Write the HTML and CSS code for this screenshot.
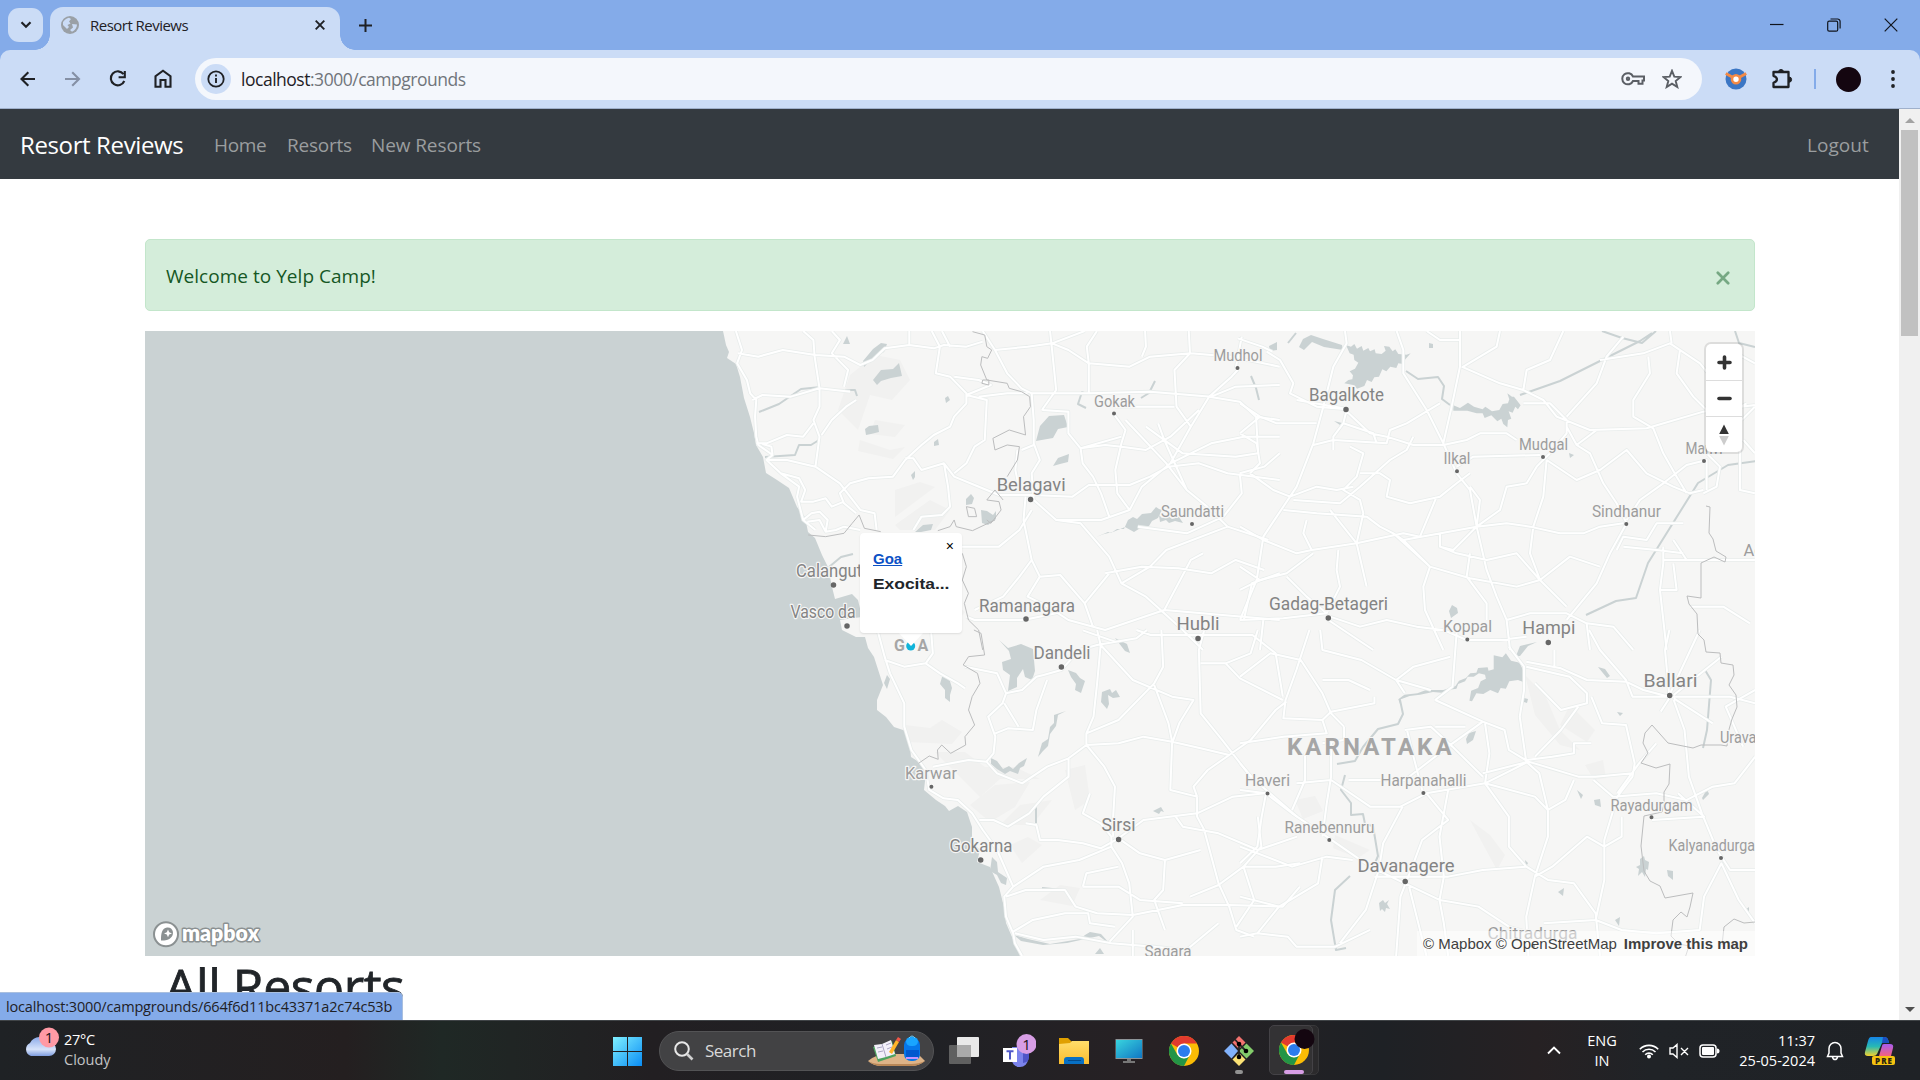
FILE: index.html
```html
<!DOCTYPE html>
<html lang="en">
<head>
<meta charset="utf-8">
<title>Resort Reviews</title>
<link rel="stylesheet" href="styles.css">
</head>
<body>
<header class="tabstrip">
  <div class="tab-search"><svg width="12" height="8" viewBox="0 0 12 8"><path d="M1.5 1.3 6 5.8l4.500-4.500" fill="none" stroke="#1f2125" stroke-width="2.2"/></svg></div>
  <div class="tab">
    <svg class="favicon" width="18" height="18" viewBox="0 0 18 18"><circle cx="9" cy="9" r="9" fill="#9aa0a6"/><path d="M2 6c2-3 4-4 6-4.300L10 3 8 5.500l1.500 2-3 1.500L8 11l-2 2-4-4zM11 8l5 .5c0 3-2 6-5 7.300L9 14l3-2.500z" fill="#cbdcf6"/></svg>
    <span class="tab-title">Resort Reviews</span>
    <svg width="10" height="10" viewBox="0 0 10 10"><path d="m.7.700 8.600 8.600M9.300.700.700 9.300" stroke="#1f2125" stroke-width="1.900"/></svg>
  </div>
  <svg class="new-tab" width="13" height="13" viewBox="0 0 13 13"><path d="M6.500 0v13M0 6.500h13" stroke="#1f2125" stroke-width="2"/></svg>
  <div class="win-buttons">
    <svg width="14" height="14" viewBox="0 0 14 14"><path d="M0 6.500h13.500" stroke="#10141c" stroke-width="1.200"/></svg>
    <svg width="14" height="14" viewBox="0 0 14 14" fill="none" stroke="#10141c" stroke-width="1.200"><rect x=".7" y="3.200" width="10" height="10" rx="1.500"/><path d="M3.500 1h7a2.500 2.500 0 0 1 2.600 2.500v7"/></svg>
    <svg width="14" height="14" viewBox="0 0 14 14"><path d="m.7.700 12.600 12.600M13.300.700.700 13.300" stroke="#10141c" stroke-width="1.200"/></svg>
  </div>
</header>
<div class="toolbar">
  <div class="nav-icons">
    <svg viewBox="0 0 24 24"><path d="M19 12H6M12.300 5.200 5.500 12l6.800 6.800" class="ico"/></svg>
    <svg viewBox="0 0 24 24"><path d="M4 12h13.500M11.200 5.200 18 12l-6.800 6.800" class="ico dim"/></svg>
    <svg viewBox="0 0 24 24"><path d="M17.500 7.200A7 7 0 1 0 18.300 14M18.800 4v6.200h-6.200" class="ico"/></svg>
    <svg viewBox="0 0 24 24"><path d="M4.500 19.800V9.200L12 3.700l7.500 5.500v10.600h-5V13h-5v6.800z" class="ico"/></svg>
  </div>
  <div class="omnibox">
    <div class="site-info"><svg width="18" height="18" viewBox="0 0 18 18"><circle cx="9" cy="9" r="7.700" fill="none" stroke="#1f2125" stroke-width="1.800"/><path d="M9 8v5M9 4.500v2" stroke="#1f2125" stroke-width="1.900"/></svg></div>
    <span class="url">localhost<span class="path">:3000/campgrounds</span></span>
    <svg class="key" width="24" height="14" viewBox="0 0 24 14" fill="none" stroke="#5b5f65" stroke-width="2"><path d="M12 4.500h11v4h-1.500v3.200h-4V9H12A5.600 5.600 0 1 1 12 4.500z"/><circle cx="7" cy="6.800" r="1.200"/></svg>
    <svg class="star" width="20" height="20" viewBox="0 0 20 20"><path d="m10 1.800 2.300 5.800 6.200.4-4.800 4 1.600 6-5.300-3.400L4.700 18l1.600-6-4.800-4 6.200-.4z" fill="none" stroke="#5b5f65" stroke-width="1.900"/></svg>
  </div>
  <svg class="ext" width="22" height="22" viewBox="0 0 22 22"><circle cx="11" cy="11" r="10.500" fill="#3b76c4"/><path d="M.8 5.500 9 10M21.200 5.500 13 10" stroke="#f48a45" stroke-width="3"/><circle cx="11" cy="11.300" r="4" fill="#fff" stroke="#f48a45" stroke-width="2.600"/></svg>
  <svg class="puzzle" width="22" height="22" viewBox="0 0 22 22"><path d="M2.500 4h15v15h-15v-4.200c4.600-1.600 4.600-5.400 0-7z" fill="none" stroke="#1f2125" stroke-width="2.300" stroke-linejoin="round"/><path d="M7.500 4a2.500 2.500 0 0 1 5 0zM18 9a2.600 2.600 0 0 1 0 5.200z" fill="#1f2125" stroke="#1f2125"/></svg>
  <div class="sep"></div>
  <div class="avatar"></div>
  <svg class="dots" width="4" height="20" viewBox="0 0 4 20" fill="#1f2125"><circle cx="2" cy="3" r="1.900"/><circle cx="2" cy="10" r="1.900"/><circle cx="2" cy="17" r="1.900"/></svg>
</div>
<div class="viewport">
  <main class="page">
    <nav class="navbar">
      <span class="brand">Resort Reviews</span>
      <span class="link home">Home</span><span class="link resorts">Resorts</span><span class="link new">New Resorts</span>
      <span class="link logout">Logout</span>
    </nav>
    <div class="container">
      <div class="alert"><span>Welcome to Yelp Camp!</span>
        <svg width="14" height="14" viewBox="0 0 14 14"><path d="m1.800 1.800 10.400 10.400M12.200 1.800 1.800 12.200" stroke="#76a883" stroke-width="2.700" stroke-linecap="round"/></svg></div>
      <div class="map">
        <svg class="canvas" width="1610" height="625" viewBox="145 331 1610 625">
          <defs>
            <g id="roads">
              <g transform="translate(640 320) scale(.408 .3333)">
                <path d="M235 33 250 90 238 130 262 180 270 220 285 240 282 290 285 350 290 375 325 405 310 420 345 460 390 500 385 530 400 600 430 630M325 405 322 380 300 372M315 420 360 420 430 440M345 460 390 475 405 510 395 545 425 545 455 535 470 560 500 545M410 605 440 600 455 635M400 600 420 580 440 575 460 600 455 635 480 630 500 620 540 630M400 33 425 60 428 110 440 205 440 260 425 300 440 350 430 440 490 490 540 570 575 580 580 630M470 33 490 60 470 100 490 125 510 150 500 200M240 100 290 110 350 90 430 105 500 110 540 135 570 120 600 85 660 75 720 85 745 75 800 80 840 65M660 75 660 33M275 240 300 225 370 230 440 205 515 215M285 370 310 370 360 345 400 350 425 310M445 345 470 300 505 260 530 240M715 33 735 80 725 160 760 170 800 220 800 250 770 290 760 320 720 345 690 375 650 420 620 470 560 475 515 490 490 520 500 550 530 580M740 33 760 80M650 415 670 415 690 450 745 430 770 470 820 495 880 525 960 525 1060 530 1100 495 1200 495 1250 470 1295 440 1370 430 1440 460 1568 480M770 460 800 430 820 380 845 360 850 240 800 225M800 225 860 195 830 180 770 170M830 230 900 220 950 220M745 430 755 500 760 560 740 585 690 590 670 630M840 33 870 90 900 160 935 205 960 220 965 300 965 370 980 420 960 460 965 540 1020 600 1080 610 1150 710 1180 790 1240 830 1285 880 1330 930 1380 990M935 390 965 375M925 390 920 450 930 510M870 90 950 80 1010 70 1050 90 1100 130 1200 140 1250 110 1350 100 1450 110 1568 140M1005 33 1010 90 1020 210 985 270M960 220 1100 220 1250 215 1400 230 1460 200 1568 195M1010 70 1090 33M1100 220 1100 130 1095 80 1120 33M1238 33 1240 80 1230 110M1345 33 1348 100 1310 150 1315 260 1350 320M1395 230 1350 320 1300 430 1230 500 1200 570 1130 600 1020 600M1160 280 1190 330 1180 370 1165 450 1170 520 1200 570M1180 350 1080 385 1050 340 1050 275 985 270M1080 385 1085 430 1110 470 1130 520 1150 590M1165 260 1310 260M1080 385 1140 375 1180 380 1240 390 1300 350 1370 270M1190 300 1290 430 1340 510 1390 560 1440 620 1540 660M960 720 980 770 1030 765 1090 850 1110 920M945 530 940 600 960 720 930 770 890 830 820 870M780 680 880 680 930 630 960 570M980 770 950 830 1000 860 1050 900 1140 930 1285 870M1180 790 1250 740 1290 690 1440 620M1285 870 1350 720 1380 700M1285 870 1568 900M1470 460 1475 520 1430 590 1340 640 1220 620M1395 230 1470 245 1510 290 1568 300M1510 290 1515 400 1460 410 1330 400 1240 320M1568 350 1480 350 1400 370 1300 430M1465 150 1450 170 1395 230M1460 145 1475 50M1465 55 1525 80 1550 95M1470 460 1530 440 1568 400M1270 310 1285 360 1340 510M800 890 820 900 940 900 1020 880M1480 900 1500 790 1568 760M1090 850 1150 760M1140 760 1230 740 1320 745 1400 760 1460 720 1530 750"/>
              </g>
              <g transform="translate(740 630) scale(.3571 .3333)">
                <path d="M385 0 405 80 420 130 460 220 460 290 480 360 520 420 530 480 570 505 610 510 650 550 680 600 720 660 765 770 740 800 745 860 765 910 770 940 790 978M405 90 460 110 520 100 560 130 610 160 630 175M535 0 540 70 520 100M630 110 720 130 745 190 790 180 830 140 850 135 900 120 950 60 1000 45 1110 25 1140 0M745 190 735 220 695 260 715 320 710 370 690 395 640 390 540 410M740 220 780 290M715 310 750 295 820 300 830 240 860 150M690 395 720 430 790 460 860 410 920 385 970 345 1060 340 1130 320 1210 335 1290 355 1370 375 1430 330 1500 240 1530 215M670 570 710 570 750 590 810 550 850 500 920 440 920 385M800 580 830 585 840 630 890 630 960 640 1010 655 1060 625M970 345 970 310 1060 270 1160 160 1185 110 1180 0M970 310 990 260 1000 160 1010 45 1000 0M1010 45 1100 150 1210 200 1270 210 1230 280 1210 340 1205 480 1280 500M970 345 1020 410 1050 470 1045 560 1045 620M1160 165 1200 280 1210 335M980 490 960 550 1010 580 1040 620 1040 650 1070 700 1090 760 1100 860 1035 935M1060 625 1130 570 1280 550 1380 500 1470 490M1300 0 1285 60 1290 250 1350 330 1430 440 1560 560M1290 100 1360 100 1430 70 1450 0M1360 100 1400 145 1520 210M1280 500 1280 560 1300 600 1340 760 1370 830 1390 900 1440 920M1280 500 1270 470 1310 420 1370 375M1220 560 1240 590 1340 610 1450 660 1560 620M765 770 850 710 950 690 1040 650M745 800 800 780 910 780 940 830 1000 850 1100 855 1240 825 1370 825 1520 830 1568 770M765 905 820 870 910 850 975 850 980 880 1050 890M1060 625 1120 670 1190 690 1290 660M960 770 1060 770 1120 810 1240 820M1110 0 1150 15 1285 15 1435 15 1500 70 1520 200M1450 560 1460 650 1410 710 1340 765 1260 800M1410 710 1500 710 1568 700M1410 710 1440 810 1390 890M770 910 850 930 940 920 1040 940 1160 950 1250 960 1340 880M1100 900 1100 978M1190 690 1185 780 1160 810 1190 900M960 770 970 730 1060 710M960 1 1050 35"/>
              </g>
              <g transform="translate(1240 320) scale(.3333)">
                <path d="M315 33 320 70 280 140 250 260 220 370 170 500 70 650 50 780 0 900M0 250 60 290 110 310 230 310M60 290 0 340M80 95 120 120 160 190 150 220 230 260 320 268M170 240 310 265 390 340 440 350 520 375 610 375 680 360 720 340 800 340 830 360M470 33 490 90 490 160 560 270 610 370 650 460 690 510 710 620 740 750 770 830 800 900 810 990M660 33 660 140 635 260 610 370M665 140 780 190 850 210 910 240 950 290 1050 330 1220 325 1390 275 1545 255M780 33 770 80 670 140M660 60 600 60 560 33M850 210 860 150 930 120 970 33M850 250 930 250 980 300 980 340 930 400 890 440 860 490 800 500 780 570 710 620M1150 50 1100 110 1070 190 980 290M1080 120 1210 100 1290 70 1380 130 1420 180M1320 90 1310 160 1360 230 1400 270M1225 110 1230 160 1180 240 1180 290 1240 325 1270 400 1310 470 1340 520M980 320 1010 375 1050 400 1090 490 1130 550 1160 610 1110 700 1070 790 980 900M1010 375 1070 330M920 420 1010 480 1080 450 1160 390 1220 460 1300 500 1350 520 1390 510M900 405 700 410 650 440M920 420 910 530 880 620 870 700 900 780M710 620 800 610 870 620 960 640 1030 640 1080 620 1150 610M1160 600 1200 540 1270 490 1340 435 1400 420 1400 510M0 340 50 370 60 430 30 460M220 375 280 360 440 370 450 330 500 310 600 250M320 270 310 310 280 350 280 390M310 310 400 340 410 370M330 380 370 400 350 470 310 510 360 540 370 580 350 670 380 800M360 460 420 460 450 480 440 530 510 550 600 530 650 490 690 460M30 460 100 510 150 530 230 500 290 510 340 500M160 540 300 550 360 500 450 420 500 390 520 350M130 570 230 580 380 590 420 620 460 640 490 660 710 620M200 600 190 640 215 690 350 670 490 640 540 650 590 530M0 620 70 660 170 700 215 690M0 740 60 780 140 760 220 700M0 810 60 780M140 770 200 830 260 880M295 690 290 750 300 800 260 880 130 895 0 900M270 890 360 920 440 900 530 920 610 930 680 960 780 960 860 950M265 900 400 990M70 900 60 990M490 660 570 740 690 775 830 800 900 780 990 710 1080 740M460 640 570 740 550 800 555 870 610 990M600 680 650 700 740 720 830 700 900 780 980 860M690 700 680 770 740 850 740 900M710 620 640 690 600 680 600 640M690 500 720 540 710 620M1150 680 1250 690 1330 700M1130 690 1150 650 1220 660 1250 610 1330 610M1270 680 1270 730 1260 810 1280 990M1300 660 1340 720M1270 720 1545 720M1300 730 1310 810 1260 810M1040 910 1120 920 1180 990M800 900 870 880 980 880 1040 910 1050 990M1350 860 1450 860 1530 910M1500 390 1500 510 1545 520M1490 100 1545 130M1520 250 1450 290M1400 400 1440 440 1430 500 1390 520M1290 33 1295 70M1505 300 1545 260M1510 360 1545 400M270 570 350 670"/>
              </g>
              <g transform="translate(1240 630) scale(.4337 .3333)">
                <path d="M0 140 70 70 140 90 190 190 210 250 240 290M160 0 130 120 105 210 100 265 190 270 210 245 310 220 310 200M190 150 250 150 300 180M185 0 190 60 280 90 360 150 440 180M485 80 400 110 360 150 380 190M500 0 490 170 450 210M620 50 655 110 655 180 645 260 660 395 690 430 710 540 710 620 680 740 660 860 665 978M660 110 760 140 800 190 800 220 740 240 680 160M660 95 740 115 800 150 890 155 930 180 990 200 1130 200 1188 220M725 60 725 115M805 0 830 60 890 150 905 200 990 200M990 200 980 60 990 0M990 195 1060 0M1000 195 1110 80M1000 205 1090 280M1000 210 1025 300 1035 440 1065 550 1100 660 1130 720 1188 720M970 245 990 205M450 210 560 275 610 300 620 360 665 395 780 440 820 440 905 430M560 275 490 340 380 450 250 450M565 280 575 370 565 460 620 560 620 650 660 710 710 750 770 760 820 850 830 978M665 395 565 460 430 490 370 530 300 530 210 450 130 460M665 395 560 430M770 450 750 510 710 540M660 390 720 380 770 370 770 340 810 340M780 230 740 300 680 380M810 200 835 280 890 285 910 400 905 440 870 500 840 630 840 750 820 870 700 880M680 740 720 710 800 620 840 650 880 620 880 560M815 450 860 500 960 490 1030 510 1090 470 1140 460 1188 380M950 570 1070 560 1010 490M565 460 680 500 710 540M430 490 480 570 420 630 400 700 370 800 360 978M375 530 330 640 320 720 290 840 230 940M380 300 440 290 490 350 560 440M385 300 400 380 420 480M450 290 520 290M480 480 460 620 470 740 460 810 470 880 480 978M0 480 60 490 120 550 200 620 300 710 380 760 460 810 550 830 620 890 700 920M60 490 50 560 40 650 0 700M0 650 120 710 200 680 260 690M190 680 180 760 90 830 40 910 0 920M40 910 110 920 130 950 220 950 300 900M310 740 400 740 480 740 560 720 660 710M390 770 430 978M820 870 880 900 960 910 1060 900 1070 800 1110 700 1150 810 1188 880M960 340 920 400 870 490M1160 350 1120 230 1188 180M190 270 200 310 100 320 0 340M240 290 240 330 190 340M210 330 210 440 200 520 190 620M150 370 150 450 120 540M0 800 90 830M0 400 40 460"/>
              </g>
            </g>
          </defs>
          <rect x="145" y="331" width="1610" height="625" fill="#f6f6f5"/>
          <g class="hills">
            <path d="m850 375 25-20 25 5 10 20-18 20-22-5-12 35-20-20zM875 420l30 5-10 12-25-3zM860 440l30 10 15-3-12 12-35-8zM895 490l25-8 15 5-20 15-20 15zM895 525l35-25 20 10-15 20-35 0zM925 610l25-10 15 12-12 15-25-5zM905 725l25 3 12-8 20 12-10 12-45-2zM935 752l30 0 20 15 30 0 25 12-40 0-20 18-25-25zM970 805l25-20 35-3-15 25-25 15zM1000 825l20-20 32-5-20 25zM1010 845l18-8 14 8-20 18zM1040 900l20-15 20 3-8 18zM1065 770l20-5 5 35-15 10zM1525 675l20 20 15 35 20 20-20-5-25-30zM1560 725l10-20 25 25-8 12zM1295 800l20-4 8 15-20 8zM1335 835l35 15-12 8-25-10zM1470 820l20 15 15 20-8 15-12-22zM1585 765l18-5 3 18-12 2z"/>
          </g>
          <path class="water" d="M145 331H723L726 345 729 352 727 358 736 364 740 377 744 398 750 417 754 433 756 445 763 457 766 473 777 480 789 488 797 507 805 517 808 532 815 538 822 555 828 567 832 587 835 599 852 594 858 600 862 617 840 620 842 630 856 637 865 637 868 648 874 657 883 685 877 700 877 710 886 717 894 727 906 731 910 747 911 757 919 762 926 772 924 790 936 800 945 806 949 811 958 806 967 812 972 827 972 842 980 850 977 862 990 867 999 887 1004 907 1006 923 1012 937 1020 956H145z"/>
          <g class="water">
            <path d="m863 361 10-12 8-6 6 1-3 8-10 5-7 7-3 3zM873 380l8-10 12-1 6-6 3 13-11 2-10 3-4 4zM865 429l4-3 9-1 1 7-8 2-5 1zM843 344l4-8 3 8zM945 398l3-2 2 4-4 3zM934 442l4-3 1 6-5 1zM911 475l4-4 0 6-2 3zM966 499l5-5 3 4-2 6-6 1zM915 532l8-7 10-1-2 6-10 2zM981 510l6 1 6 4 3-4 0 8-8 6-6-2zM1036 441l4-15 9-10 15-1 4 12-10 2-5 9zM1053 466l5-8 11-4-1 8-8 2z"/>
            <path d="m1096 537 12-5 3 1 6-4 7 0 4-9 5-3 4 2 5-5 9-1 5-6 3 2 3 1-4 8-6 3-3 5-7 1-8 5-9-5-12 5-9 2zM1159 515l3 3 6-2 4 3 7-2 4 6-8-2-6 2-3-3-6 2zM999 640l9 8 13-4 12 5 2 22-3 9-7-3-2-8-6 9 0 9-9 4 2-16-7-5-1-8 9-3-2-8zM1068 670l8 3 4 5 5 3-2 6-2 6-6-3 1-6-5-7zM1102 692l8-3 2 4 4-3 4 7-7 1-5-3 1 9-2 5-6-7zM944 677l5 1 3 10-2 7 0 7-5-4 0-8-5-6 2-7zM1066 711l-8 4-2 11-6 8-2 12-5 5-5 6 4-14 6-4 2-12 4-4 0-8zM991 758l6 3 6 8 6-3 4 3 6-6 8-5-3 8-4 2-2 6-8-3-5 3-8-5-6-5zM1153 811l8-4 3 5-3-1-2 3zM1115 638l12 6 3 9-5-2zM992 857l5 5 1 10 9 6-1 7-5-2-4-8-7-4zM1014 935l14 4 22 5 30-5 5-4 5-3 11 2 10 11-12-9-14 3-18 4-24 2-22-4zM1095 954l5-6 4 6zM884 683l3-8 3 4-3 10z"/>
            <path transform="translate(1240 320) scale(.3333)" d="m318 75 15 5 10-8 8 14 14-8 5 14 15-8 5 10 14-6 3 12 18 2 12-10-5-14 16 2 10 14 8-6 9 14 25 2 12-4-16 18-6 14-15-2-6 14-18-4-12 14-12-6-10 22-14 2-8 14-14-6-8 18-22 8-8-10-30-6 12-10 12-2 2-12-10-12 16-8 10-18-12-8-2-16-12-4z"/>
            <path transform="translate(1240 320) scale(.3333)" d="m640 256 20 8 24-16 18 12 26 8 8-8 20 14 22-4 10-18 16-2 4-12-6-18 14 10 6 0 20 26-8 12-8-8-8 18-12-4 8 22-10 4-2 22-12-10-6-16-12 8-18-18-20 8-6-14-18 0-28-8-42 0z"/>
            <path d="M1311 335l12 4 19 6 1 5-19-3-12-5-8 8-5-3 4-8zM1269 346l8-4 0 8-7 1zM1429 343l4 1 0 4-4 0zM1334 421l8 2-2 2zM1569 453l5 2-4 3zM1449 611l3-6 5 3 1 5-7 5zM1516 656l4-10 17-4-9 4-8 10z"/>
            <path transform="translate(1240 630) scale(.4337 .3333)" d="m585 76 20 6 8-12 12 22 20 6 10 30-2 28-12-6-20 4-8 22-12-2-6 16-18-10-16 12-16-2-10 24-6-2 4-30 16-8 6-20 12-8-2-12-14-4-12 10-14 0-6 14-16 8-4 14-20 4-14 8-20-2-30 8-24 4-20 10-2 14-4-14 14-14 30-4 20-10 40 0 28-12 8-16 16-8 10-14 14-2 4-14 22-2 2 10 12-4z"/>
            <path d="M1598 667l7 2 5 7-3 2zM1617 712l6 1-3 3zM1524 698l4 1-1 4-3-1zM1466 739l3-6 7-2-3 9-6 4zM1577 790l6 5-2 4zM1594 800l6-1 1 8-6-2zM1640 859l4-3 1 4 4 2-1 8-2-1-1 8-3-5-4 4 1-7-3-2 4-2zM1667 870l6 1 0 9-5-4zM1525 860l3 3-2 4zM1558 892l6-4-1 8zM1379 903l4-3 2 3 4-3-2 4 3 5-4-1-1 4-3-3-2 2zM1615 920l5-3-1 9zM1702 798l5-9 2 5-6 6zM1745 910l4-3 0 9z"/>
          </g>
          <g class="rivers">
            <path d="m759 412 20-8 22-15 20-2M845 390h10l2 6M765 457l30-2 4-10 12 0 8-5M1141 398l8-5 6-12M1251 376l5 12 3 12M1086 408l-8-4 4-12 4 2M829 567l12-10 12-3M1406 371l12 8 20-2 6 9-2 13 8 6M1520 395l40-14 40-20 40-20 12-8M1602 331l20 7 20 5 14-12M1735 331l4 12 16 4M1586 615l30-14 20-3 12-35 25-40 25-40 30-18 28-4M1400 700l3 14-5 10-20 5-15 18-8 14-18 3M1345 775l-4 15 10 13 0 12 12-1 2 10 8 2 5 30-6 14M1350 876l-15 14-4 30 5 30 10-2M1705 670l6 10-4 50-4 18M1288 343l8-10M1036 805l0 18M1042 888l20 2"/>
          </g>
          <use href="#roads" class="casing"/>
          <use href="#roads" class="road"/>
          <g class="borders">
            <path transform="translate(640 320) scale(.408 .3333)" d="M815 35 845 45 850 80 862 90 852 115 838 110 835 135 850 180 900 190 905 205 935 215 955 230 957 260 940 290 945 345 905 330 865 355 870 390 900 375 930 380 925 420 900 470M890 540 870 510 850 540 880 545 885 570 860 610 850 600M800 560 820 565 825 590 805 590zM840 180 855 180 855 195 838 190zM870 600 815 632 775 620 770 600 760 620 730 632M412 645 455 650 500 640 520 610 537 585 550 625 590 635M790 700 800 740 790 780 805 820 795 850 805 900 830 930 840 990"/>
            <path transform="translate(740 630) scale(.3571 .3333)" d="M655 0 675 10 685 75 640 80 625 105 665 130 672 160 650 200 640 240 657 285 630 320 632 345 590 370 565 345 553 360 555 388 530 378 500 400"/>
            <path d="m1706 506 4 1-1 26 4 6 3 12 10 6-1 5-11-5-13 6v35l-14-2 2 8 8 10 1 20 6 6 2 12 14 1 1 10 12 2 1 10-5 10 7 10 1 12-5 12-4 14-1 13-6-1-20 0-8 3-25-5-16-18-7 8-2 10 5 10-7 10 15 5 14-4-1 20-5 8 0 12-2 8-18 4-3 30 3 25 6 10 10 5 5 12 28-5-3 14-3 10-6-5-8 8-2 16 8 8 10 2-4 12 12 10"/>
            <path d="m1722 945 2-18 10-8 10 4 11-1"/>
          </g>
          <g class="towns small">
            <text x="1213.500" y="361" textLength="49" lengthAdjust="spacingAndGlyphs">Mudhol</text><text x="1094" y="406.500" textLength="41" lengthAdjust="spacingAndGlyphs">Gokak</text><text x="1161" y="517" textLength="63" lengthAdjust="spacingAndGlyphs">Saundatti</text><text x="905" y="779" textLength="52" lengthAdjust="spacingAndGlyphs">Karwar</text><text x="1144.500" y="956.500" textLength="47" lengthAdjust="spacingAndGlyphs">Sagara</text><text x="1245" y="785.500" textLength="45" lengthAdjust="spacingAndGlyphs">Haveri</text><text x="1443.500" y="464.300" textLength="27" lengthAdjust="spacingAndGlyphs">Ilkal</text><text x="1519" y="450" textLength="49" lengthAdjust="spacingAndGlyphs">Mudgal</text><text x="1685.500" y="454" textLength="37" lengthAdjust="spacingAndGlyphs">Manvi</text><text x="1592" y="517" textLength="69" lengthAdjust="spacingAndGlyphs">Sindhanur</text><text x="1743.500" y="555.700">Adoni</text><text x="1443" y="631.500" textLength="49" lengthAdjust="spacingAndGlyphs">Koppal</text><text x="1720" y="743" textLength="76" lengthAdjust="spacingAndGlyphs">Uravakonda</text><text x="1380.500" y="786" textLength="86" lengthAdjust="spacingAndGlyphs">Harpanahalli</text><text x="1284.500" y="833" textLength="90" lengthAdjust="spacingAndGlyphs">Ranebennuru</text><text x="1610.500" y="810.700" textLength="82" lengthAdjust="spacingAndGlyphs">Rayadurgam</text><text x="1668.500" y="851.300" textLength="99" lengthAdjust="spacingAndGlyphs">Kalyanadurgam</text><text x="1487.500" y="939.300" textLength="90" lengthAdjust="spacingAndGlyphs">Chitradurga</text>
          </g>
          <g class="towns large">
            <text x="996.700" y="491" textLength="69" lengthAdjust="spacingAndGlyphs">Belagavi</text><text x="796" y="577" textLength="75" lengthAdjust="spacingAndGlyphs">Calangute</text><text x="790.500" y="617.700" textLength="65" lengthAdjust="spacingAndGlyphs">Vasco da</text><text x="979" y="611.700" textLength="96" lengthAdjust="spacingAndGlyphs">Ramanagara</text><text x="1033.500" y="658.700" textLength="57" lengthAdjust="spacingAndGlyphs">Dandeli</text><text x="949.500" y="852.300" textLength="63" lengthAdjust="spacingAndGlyphs">Gokarna</text><text x="1101.500" y="831.300" textLength="34" lengthAdjust="spacingAndGlyphs">Sirsi</text><text x="1309" y="401" textLength="75" lengthAdjust="spacingAndGlyphs">Bagalkote</text><text x="1269" y="610" textLength="119" lengthAdjust="spacingAndGlyphs">Gadag-Betageri</text><text x="1643.500" y="687" textLength="54" lengthAdjust="spacingAndGlyphs">Ballari</text><text x="1357.500" y="872.300" textLength="97" lengthAdjust="spacingAndGlyphs">Davanagere</text><text x="1176.500" y="630" textLength="43" lengthAdjust="spacingAndGlyphs">Hubli</text><text x="1522.300" y="634" textLength="53" lengthAdjust="spacingAndGlyphs">Hampi</text>
          </g>
          <g class="region"><text x="1287" y="755" class="state">KARNATAKA</text><text x="894" y="651">G</text><text x="917.500" y="651">A</text></g>
          <path class="dot-sm" d="M1237.500 368h0M1114 413.500h0M1192 524h0M931.400 786.700h0M1267.500 793.500h0M1457 471.300h0M1543 457h0M1704 461h0M1626.300 524h0M1467.300 639.500h0M1423.400 793h0M1329.300 840h0M1651.500 817.300h0M1721 858h0M1533 946h0"/>
          <path class="dot-lg" d="M1030.600 499.500h0M833.500 585h0M847 626h0M1026 619h0M1061.400 667h0M980.700 860h0M1118.600 839.500h0M1346 409.500h0M1328.300 618h0M1669.700 695.500h0M1405.200 881.500h0M1198 638.500h0M1548.300 642.500h0"/>
          <circle cx="910.700" cy="646" r="4.500" fill="#11b4da"/>
          <path d="M898 632h26l-13 14z" fill="#fff"/>
          <g class="logo"><circle cx="166" cy="934.300" r="12" fill="#fff" stroke="#8b9192" stroke-width="2"/><path d="M161 940.500c0-8 1-12 6-13 6-.7 7.500 6 4.500 9.500-2.700 3.200-6 3.500-10.500 3.500z" fill="#8b9192"/><path d="m168 929.500 1.200 2.700 2.800 1.200-2.800 1.200-1.200 2.700-1.200-2.700-2.800-1.200 2.800-1.200z" fill="#fff"/><text x="182" y="941" textLength="77" lengthAdjust="spacingAndGlyphs">mapbox</text></g>
        </svg>
        <div class="zoom-controls">
          <div><svg width="15" height="15" viewBox="0 0 15 15"><path d="M7.500 2v11M2 7.500h11" stroke="#333" stroke-width="3.600" stroke-linecap="round"/></svg></div>
          <div><svg width="15" height="15" viewBox="0 0 15 15"><path d="M2 7.500h11" stroke="#333" stroke-width="3.600" stroke-linecap="round"/></svg></div>
          <div><svg width="10" height="22" viewBox="0 0 10 22"><path d="m5 .500 4.800 9.500H.2z" fill="#333"/><path d="m5 21.500 4.800-9.500H.2z" fill="#ccc"/></svg></div>
        </div>
        <div class="popup"><span class="popup-close">×</span><a>Goa</a><strong>Exocita...</strong></div>
        <div class="attribution"><span>© Mapbox © OpenStreetMap</span><b>Improve this map</b></div>
      </div>
      <h1>All Resorts</h1>
    </div>
    <div class="status">localhost:3000/campgrounds/664f6d11bc43371a2c74c53b</div>
  </main>
  <div class="scrollbar">
    <svg width="10" height="5" viewBox="0 0 10 5"><path d="M0 5 5 0l5 5z" fill="#a3a3a3"/></svg>
    <div class="thumb"></div>
    <svg class="down" width="10" height="5" viewBox="0 0 10 5"><path d="M0 0h10L5 5z" fill="#505050"/></svg>
  </div>
</div>
<footer class="taskbar">
  <div class="weather">
    <svg width="36" height="32" viewBox="0 0 36 32"><defs><linearGradient id="cl" x2="0" y2="1"><stop offset="0" stop-color="#8cabe9"/><stop offset=".65" stop-color="#d7e3fa"/><stop offset="1" stop-color="#7e9ddf"/></linearGradient></defs><path d="M7 30a7 7 0 0 1-1-13A11 11 0 0 1 25 16a7 7 0 0 1 0 14z" fill="url(#cl)"/><circle cx="25" cy="11.500" r="10" fill="#ff9aa5"/><text x="25" y="17" class="badge">1</text></svg>
    <div class="weather-text"><span>27°C</span><span class="muted">Cloudy</span></div>
  </div>
  <div class="apps">
    <svg width="30" height="30" viewBox="0 0 30 30"><defs><linearGradient id="win" x2="1" y2="1"><stop offset="0" stop-color="#7ff0ff"/><stop offset="1" stop-color="#0a8df5"/></linearGradient></defs><path d="M1 1h14v14H1zM16 1h14v14H16zM1 16h14v14H1zM16 16h14v14H16z" fill="url(#win)"/></svg>
    <div class="search">
      <svg width="20" height="20" viewBox="0 0 20 20"><circle cx="8" cy="8" r="6.800" fill="none" stroke="#e8e8e8" stroke-width="2"/><path d="m13 13 5.500 5.500" stroke="#d0d0d0" stroke-width="2.600"/></svg>
      <span>Search</span>
      <svg class="school" width="58" height="32" viewBox="0 0 58 32"><path d="M0 26q8-7 20-7h30l7 7q-6 5-14 5H14Q5 31 0 26z" fill="#ddb387"/><path d="M0 26q6 5 14 5h29q8 0 14-5-6 3-14 3H12Q5 29 0 26z" fill="#b98756"/><path d="m5 12 19-6 4 15-18 6z" fill="#4da35f"/><path d="m6 10 8-1 9-4 4 14-9 3-8 2z" fill="#f3f0fa"/><path d="m14 9 4 13M9 13l5-1M10 17l5-1M18 10l5-2M19 14l5-2" stroke="#aaa5c4"/><path d="M21 17 28 5l3 2-7 12z" fill="#ffb429"/><path d="m28 5 2-3 3 2-2 3z" fill="#ef5748"/><rect x="36" y="3" width="16" height="23" rx="7" fill="#0677e9"/><rect x="38" y="2" width="12" height="9" rx="5" fill="#19a5ff"/><path d="M38 15h13v7H38z" fill="#0058cf"/><path d="M38 22h12v2H38z" fill="#c394ff"/><path d="M41 3q3-4 6 0" stroke="#68cfff" fill="none"/></svg>
    </div>
    <div class="app"><svg width="32" height="28" viewBox="0 0 32 28"><rect x="9" y="0" width="22" height="20" rx="1" fill="#e9e9e9"/><rect x="1" y="8" width="22" height="19" rx="1" fill="#6b6b6b" opacity=".85"/><rect x="9" y="8" width="14" height="12" fill="#aaa"/></svg></div>
    <div class="app teams"><svg width="36" height="36" viewBox="0 0 36 36"><circle cx="22" cy="11" r="5" fill="#7b83eb"/><path d="M12 14h16v12a8 8 0 0 1-8 8h-1a7 7 0 0 1-7-8z" fill="#7b83eb"/><path d="M23 16h6v9q0 4-6 5z" fill="#4f55c8"/><rect x="3" y="15" width="14" height="14" fill="#fff"/><path d="M6.500 18.300h7M10 18v8.500" stroke="#5059c9" stroke-width="2"/><circle cx="26.500" cy="11" r="10" fill="#d79ee5"/><text x="26.500" y="16.500" class="badge">1</text></svg></div>
    <div class="app"><svg width="32" height="28" viewBox="0 0 32 28"><defs><linearGradient id="fo" x2="0" y2="1"><stop offset="0" stop-color="#ffdd6b"/><stop offset="1" stop-color="#fbbd2e"/></linearGradient></defs><path d="M1 1h9l4 4h6v9H1z" fill="#e0a000"/><path d="M1 7l11-1 2-2h17v23H1z" fill="url(#fo)"/><path d="M6 27v-4q0-3 3-3h14q3 0 3 3v4z" fill="#0870c4"/><path d="M10 23.500h13" stroke="#034b8c"/></svg></div>
    <div class="app"><svg width="28" height="26" viewBox="0 0 28 26"><defs><linearGradient id="mo" x2="1" y2="1"><stop offset="0" stop-color="#38d4de"/><stop offset="1" stop-color="#1177c4"/></linearGradient></defs><path d="M12 20h4v4h-4zM8 23h12v2H8z" fill="#777"/><rect x=".5" y="1" width="27" height="20" fill="#8d9498"/><rect x="1" y="2" width="26" height="18" fill="url(#mo)"/></svg></div>
    <div class="app"><svg width="30" height="30" viewBox="0 0 30 30"><g id="chrome"><circle cx="15" cy="15" r="15" fill="#fbbc05"/><path d="M15 15 2 7.500A15 15 0 0 1 28 7.500H15z" fill="#e23a2e"/><path d="M2 7.500 8.500 19 15 22.500 21 18.500 15 30A15 15 0 0 1 2 7.500z" fill="#239546"/><circle cx="15" cy="15" r="7.500" fill="#fff"/><circle cx="15" cy="15" r="6" fill="#2b7ced"/></g></svg></div>
    <div class="app run"><svg width="30" height="30" viewBox="0 0 30 30"><path d="m15 0 6.500 6.500L15 13 8.500 6.500z" fill="#f2726f"/><path d="m7.500 7.500 6.500 7.500-6.500 7.500L0 15z" fill="#82b2fb"/><path d="m22.500 7.500 7.500 7.500-7.500 7.500L15 15z" fill="#83cc6b"/><path d="m15 17 6.500 6.500L15 30l-6.500-6.500z" fill="#fbe175"/><path d="M11 3.500 15 8v13M15 8l7 7" stroke="#252526" stroke-width="1.800" fill="none"/><circle cx="15" cy="8" r="2.300"/><circle cx="22" cy="15" r="2.300"/><circle cx="15" cy="21" r="2.300"/></svg></div>
    <div class="app active"><div class="stack"></div><div class="frame"><svg width="36" height="36" viewBox="0 0 36 36"><use href="#chrome" x="0" y="6"/><circle cx="25.500" cy="10" r="10" fill="#140610"/></svg></div></div>
  </div>
  <div class="tray">
    <svg class="chev" width="14" height="9" viewBox="0 0 14 9"><path d="m1 7.500 6-6 6 6" fill="none" stroke="#fff" stroke-width="1.900"/></svg>
    <div class="lang"><span>ENG</span><span>IN</span></div>
    <svg class="wifi" width="20" height="16" viewBox="0 0 20 16" fill="none" stroke="#fff" stroke-width="1.600"><path d="M.8 6.200a13 13 0 0 1 18.400 0M3.500 9a9.200 9.200 0 0 1 13 0M6.200 11.700a5.400 5.400 0 0 1 7.600 0"/><circle cx="10" cy="13.600" r="1.200" fill="#fff"/></svg>
    <svg class="mute" width="20" height="16" viewBox="0 0 20 16" fill="none" stroke="#fff" stroke-width="1.400"><path d="M1 5h3l4-3.500v13L4 11H1zM12 5l7 7M19 5l-7 7"/></svg>
    <svg class="batt" width="21" height="14" viewBox="0 0 21 14"><rect x="1" y="1" width="16" height="12" rx="3" fill="none" stroke="#fff" stroke-width="1.500"/><rect x="3" y="3" width="12" height="8" rx="1" fill="#fff"/><path d="M18 4.500q2.500 0 2.500 2.500T18 9.500z" fill="#fff"/></svg>
    <div class="clock"><span>11:37</span><span>25-05-2024</span></div>
    <svg class="bell" width="18" height="20" viewBox="0 0 18 20" fill="none" stroke="#fff" stroke-width="1.500"><path d="M1.500 15.500 3 12V7.500a6 6 0 0 1 12 0V12l1.500 3.500zM6.500 16q.5 2.500 2.500 2.500t2.500-2.500"/></svg>
    <svg class="copilot" width="32" height="30" viewBox="0 0 32 30"><defs><linearGradient id="c1" x2="0" y2="1"><stop offset="0" stop-color="#1685e8"/><stop offset=".5" stop-color="#27b9b4"/><stop offset="1" stop-color="#f4d12c"/></linearGradient><linearGradient id="c2" x2="0" y2="1"><stop offset="0" stop-color="#a85cf0"/><stop offset="1" stop-color="#f4627d"/></linearGradient></defs><path d="M7 1h14q3 0 4 6h-7l-5 11q-1 2-4 2H4q-4 0-3-4L4 5q1-4 3-4z" fill="url(#c1)"/><path d="M19 1h2q3 0 4 6h-7z" fill="#1b4fc0"/><path d="M20 8h6q4 0 3 4l-2 8H15l3-10q0-2 2-2z" fill="url(#c2)"/><rect x="8" y="20" width="23" height="9" rx="2" fill="#f5c211"/><text x="19.500" y="28" class="pre" textLength="17">PRE</text></svg>
  </div>
</footer>
</body>
</html>
```
FILE: styles.css
```css
* { box-sizing: border-box; }
body { margin: 0; width: 1920px; height: 1080px; overflow: hidden; display: flex; flex-direction: column; background: #84abe9; color: #212529; font-family: "Open Sans", "Noto Sans", sans-serif; }
svg { display: block; flex: none; }
span, b, strong { white-space: nowrap; }

/* Tab strip */
.tabstrip { height: 50px; flex: none; display: flex; align-items: center; padding-left: 8px; }
.tab-search { width: 35px; height: 34px; border-radius: 11px; background: #cbdcf6; display: flex; align-items: center; justify-content: center; }
.tab { position: relative; align-self: flex-end; margin-left: 7px; width: 290px; height: 43px; border-radius: 13px 13px 0 0; background: #cbdcf6; display: flex; align-items: center; padding: 0 15px 7px 11px; }
.tab::before, .tab::after { content: ""; position: absolute; bottom: 0; width: 15px; height: 15px; }
.tab::before { left: -15px; background: radial-gradient(circle at 0 0, transparent 14.5px, #cbdcf6 15px); }
.tab::after { right: -15px; background: radial-gradient(circle at 100% 0, transparent 14.5px, #cbdcf6 15px); }
.tab-title { margin-left: 11px; flex: 1; font-size: 15px; letter-spacing: -.52px; color: #1f2125; }
.new-tab { margin-left: 19px; }
.win-buttons { margin-left: auto; display: flex; gap: 43px; padding-right: 22px; }

/* Toolbar */
.toolbar { height: 59px; flex: none; display: flex; align-items: center; background: #cbdcf6; border-bottom: 1px solid #9fb0cb; border-radius: 10px 10px 0 0; padding-left: 16px; }
.nav-icons { display: flex; gap: 21px; }
.nav-icons svg { width: 24px; height: 24px; }
.ico { fill: none; stroke: #1f2125; stroke-width: 2.1; }
.dim { stroke: #8590a5; }
.omnibox { flex: 1; height: 42px; margin-left: 20px; border-radius: 21px; background: #f4f7fc; display: flex; align-items: center; padding: 0 20px 0 6px; }
.site-info { width: 30px; height: 30px; border-radius: 50%; background: #cbdcf6; display: flex; align-items: center; justify-content: center; }
.url { margin-left: 10px; flex: 1; font-size: 17.500px; letter-spacing: -.48px; color: #1f2125; }
.path { color: #70757b; }
.key { margin-right: 17px; }
.ext { margin-left: 23px; }
.puzzle { margin-left: 24px; }
.sep { width: 2px; height: 20px; background: #84abe9; margin-left: 21px; }
.avatar { width: 25px; height: 25px; border-radius: 50%; background: #140610; margin-left: 20px; }
.dots { margin: 0 25px 0 30px; }

/* Page */
.viewport { height: 911px; flex: none; display: flex; background: #fff; }
.page { position: relative; width: 1899px; height: 911px; overflow: hidden; }
.navbar { height: 70px; background: #343a40; display: flex; align-items: center; padding: 1px 30px 0 20px; }
.brand { width: 194px; color: #fff; font-size: 24px; letter-spacing: -.38px; }
.link { color: #9a9d9f; font-size: 19px; letter-spacing: -.35px; }
.home { width: 73px; }
.resorts { width: 84px; letter-spacing: -.25px; }
.new { letter-spacing: -.1px; }
.logout { margin-left: auto; letter-spacing: .1px; }
.container { width: 1610px; margin: 60px 0 0 145px; }
.alert { height: 72px; border: 1px solid #c3e6cb; border-radius: 5px; background: #d4edda; color: #155724; display: flex; align-items: center; justify-content: space-between; padding: 2px 24px 0 20px; font-size: 19px; letter-spacing: .03px; }
.alert svg { margin-top: 3px; }
.map { position: relative; margin-top: 20px; height: 625px; overflow: hidden; }
h1 { margin: 0 0 0 20px; font-size: 50px; line-height: 60px; font-weight: 500; letter-spacing: -.5px; -webkit-text-stroke: .8px #212529; }

/* Map drawing */
.water { fill: #cad2d3; }
.hills { fill: #f1f1f0; }
.rivers { fill: none; stroke: #cad2d3; stroke-width: 2; stroke-linejoin: round; }
.casing, .road { fill: none; stroke-linejoin: round; }
#roads path, .borders path { vector-effect: non-scaling-stroke; }
.casing { stroke: #e9edec; stroke-width: 3.6; }
.road { stroke: #fff; stroke-width: 2; }
.borders { fill: none; stroke: #bcbdbe; stroke-width: 1; }
.towns { font-family: Roboto, sans-serif; paint-order: stroke; stroke: #f6f6f5; stroke-width: 2.5px; stroke-linejoin: round; }
.small { font-size: 16.500px; fill: #9d9d9d; }
.large { font-size: 19px; fill: #848484; }
.region { font: 700 16px Roboto, sans-serif; fill: #a6a6a6; paint-order: stroke; stroke: #f6f6f5; stroke-width: 2px; }
.state { font-size: 24px; letter-spacing: 3.1px; }
.dot-sm, .dot-lg { fill: none; stroke: #666; stroke-linecap: round; stroke-width: 4; }
.dot-lg { stroke-width: 5.5; }
.logo text { font: 800 22px Lato, sans-serif; fill: #fff; stroke: #8b9192; stroke-width: 3px; paint-order: stroke; stroke-linejoin: round; }

/* Map overlays */
.zoom-controls { position: absolute; right: 13px; top: 13px; width: 36px; border-radius: 5px; background: #fff; box-shadow: 0 0 0 2px rgba(0,0,0,.1); }
.zoom-controls div { height: 36px; display: flex; align-items: center; justify-content: center; }
.zoom-controls div + div { border-top: 1px solid #ddd; }
.popup { position: absolute; left: 715px; top: 202px; width: 102px; height: 100px; padding: 17px 12px 17px 13px; border-radius: 4px; background: #fff; box-shadow: 0 1px 2px rgba(0,0,0,.1); font: 700 15px/18px "Liberation Sans", sans-serif; display: flex; flex-direction: column; align-items: flex-start; gap: 7px; }
.popup a { color: #0b51c5; text-decoration: underline; }
.popup strong { transform: scaleX(1.16); transform-origin: left; }
.popup-close { position: absolute; right: 8px; top: 4px; font-weight: 400; font-size: 14px; color: #000; }
.attribution { position: absolute; right: 0; bottom: 0; height: 25px; width: 338px; padding: 0 7px 0 6px; background: rgba(255,255,255,.5); display: flex; align-items: center; justify-content: space-between; font: 15px "Liberation Sans", sans-serif; color: #404040; }
.attribution b { letter-spacing: 0; }
.status { position: absolute; left: 0; bottom: 0; width: 403px; height: 28px; border: 1px solid #a9bfdf; border-width: 1px 1px 0 0; border-radius: 0 5px 0 0; background: #84abe9; padding-left: 6px; font-size: 14.500px; line-height: 27px; letter-spacing: -.17px; color: #1f2125; white-space: nowrap; }

/* Scrollbar */
.scrollbar { width: 21px; background: #f0f0f0; display: flex; flex-direction: column; align-items: center; padding-top: 9px; }
.thumb { width: 17px; height: 206px; margin-top: 7px; background: #c1c1c1; }
.down { margin: auto 0 8px; }

/* Taskbar */
.taskbar { height: 60px; flex: none; display: flex; background: linear-gradient(90deg, #1f2225, #241f20 18%, #1f2825 23%, #221f22 34%, #1f2125 47%, #272124 60%, #1e2125 72%, #262123 80%, #202327 86%, #1f2226); border-top: 1px solid #404447; color: #fff; font-size: 14.500px; letter-spacing: 0; }
.weather { width: 612px; display: flex; padding: 5px 0 0 24px; }
.weather-text { display: flex; flex-direction: column; padding-left: 4px; line-height: 20px; padding-top: 4px; }
.weather-text span:first-child { letter-spacing: -.3px; }
.muted { color: #c3c4c6; }
.badge { font: 15px "Open Sans", sans-serif; text-anchor: middle; fill: #171317; }
.apps { display: flex; align-items: center; }
.search { width: 275px; height: 40px; margin: 0 2px 0 17px; border-radius: 20px; background: #424244; border: 1px solid #535355; display: flex; align-items: center; padding: 0 7px 0 14px; color: #d9d9d9; font-size: 17px; letter-spacing: -.5px; }
.search span { margin-left: 11px; flex: 1; }
.app { position: relative; width: 55px; height: 59px; display: flex; align-items: center; justify-content: center; }
.teams { padding-right: 1px; }
.run::after, .active::after { content: ""; position: absolute; bottom: 6px; width: 8px; height: 4px; border-radius: 2px; background: #929292; }
.active::after { width: 20px; background: #d79ee5; left: 18px; }
.frame { position: absolute; left: 3px; top: 4px; width: 44px; height: 50px; border-radius: 5px; border: 1px solid #444246; background: #333234; padding: 3px 0 0 9px; }
.stack { position: absolute; left: 21px; top: 4px; width: 32px; height: 50px; border-radius: 5px; border: 1px solid #38383a; background: #2b2a2c; }
.tray { display: flex; align-items: center; margin-left: auto; padding-right: 24px; }
.lang { width: 44px; display: flex; flex-direction: column; align-items: center; line-height: 20px; margin: 0 15px 0 19px; }
.mute { margin-left: 10px; }
.batt { margin-left: 10px; }
.clock { width: 95px; display: flex; flex-direction: column; align-items: flex-end; line-height: 20px; }
.bell { margin-left: 11px; }
.copilot { margin-left: 20px; }
.pre { font: 800 8px "Open Sans", sans-serif; text-anchor: middle; fill: #2b2410; }
```
